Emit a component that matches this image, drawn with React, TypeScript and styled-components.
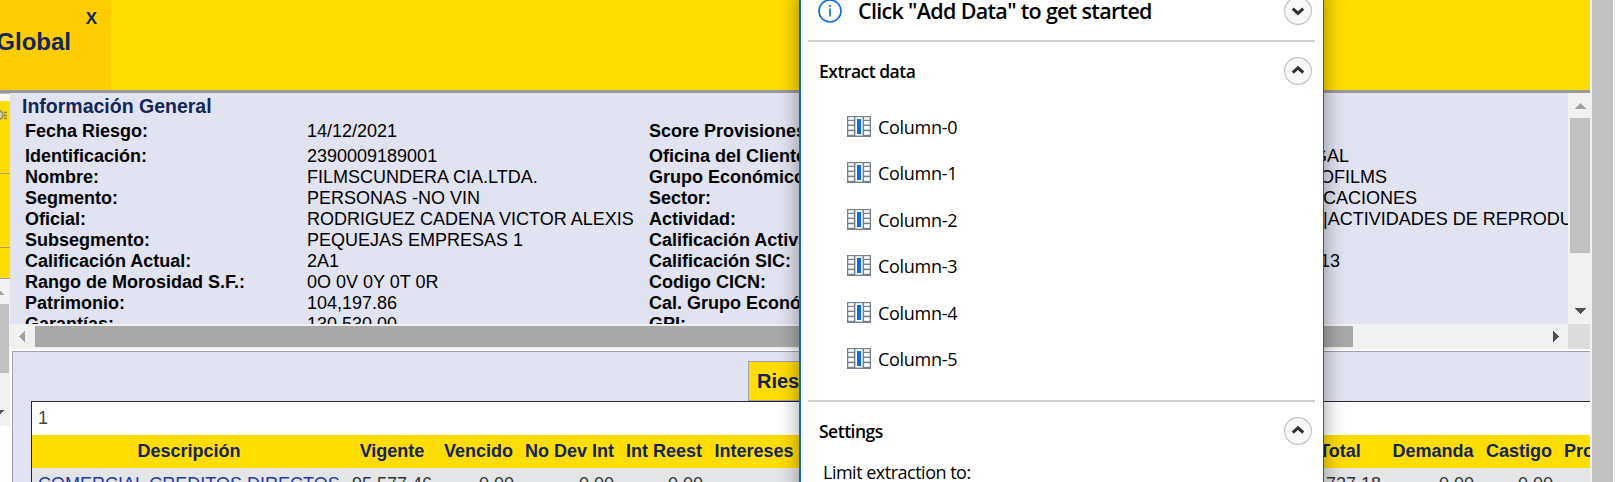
import React from 'react';
import styled, { createGlobalStyle } from 'styled-components';

const Global = createGlobalStyle`
  * { box-sizing: border-box; }
  body { margin: 0; background: #fff; overflow: hidden; font-family: "Liberation Sans", Arial, sans-serif; }
`;

const NAVY = '#12265c';
const YELLOW = '#ffdd00';
const LILAC = '#e1e3f1';

const Screen = styled.div`
  position: relative;
  display: flex;
  width: 1615px;
  height: 482px;
  overflow: hidden;
`;
const Page = styled.div`
  width: 1590px;
  display: flex;
  flex-direction: column;
`;
const PageScroll = styled.div`
  width: 25px;
  padding: 0 2px;
  background: #f1f1f1;
`;
const PageThumb = styled.div`
  height: 100%;
  background: #c1c1c1;
`;
const Header = styled.header`
  height: 93px;
  flex: none;
  background: ${YELLOW};
  border-bottom: 3px solid #999;
  color: ${NAVY};
  font-weight: bold;
`;
const HeaderTab = styled.div`
  width: 111px;
  height: 90px;
  background: #ffcc00;
  display: flex;
  flex-direction: column;
  align-items: flex-end;
`;
const CloseMark = styled.span`
  font-size: 17px;
  line-height: 20px;
  margin: 9px 14px 0 0;
`;
const HeaderTitle = styled.span`
  font-size: 24px;
  line-height: 28px;
  margin: -1px 40px 0 0;
`;
const Body = styled.div`
  flex: 1;
  display: flex;
  min-height: 0;
`;
const Side = styled.aside`
  width: 10px;
  flex: none;
  overflow: hidden;
`;
const SideTop = styled.div`
  height: 8px;
  border-top: 1px solid #b5b6c6;
`;
const SideItem = styled.div<{ $h: number; $line: string }>`
  height: ${p => p.$h}px;
  background: ${YELLOW};
  border-bottom: 1px solid ${p => p.$line};
  svg { display: block; }
`;
const SideScroll = styled.div`
  height: 147px;
  background: #f1f1f1;
  display: flex;
  flex-direction: column;
  svg { display: block; }
`;
const SideThumb = styled.div`
  width: 9px;
  height: 69px;
  background: #c1c1c1;
`;
const Main = styled.main`
  flex: 1;
  min-width: 0;
  display: flex;
  flex-direction: column;
`;
const InfoPane = styled.section`
  display: grid;
  grid-template-columns: 1558px 22px;
  grid-template-rows: 231px 25px;
  flex: none;
`;
const InfoBody = styled.div`
  background: ${LILAC};
  overflow: hidden;
`;
const InfoTitle = styled.h1`
  margin: 0;
  padding-left: 12px;
  height: 28px;
  font-size: 19.5px;
  line-height: 27px;
  color: ${NAVY};
  white-space: nowrap;
`;
const InfoRow = styled.div<{ $h: number }>`
  display: grid;
  grid-template-columns: 282px 342px 664px 1fr;
  padding-left: 15px;
  height: ${p => p.$h}px;
  font-size: 18px;
  line-height: 21px;
  color: #000;
  white-space: nowrap;
`;
const Label = styled.span`
  font-weight: bold;
`;
const Value = styled.span<{ $indent?: number }>`
  padding-left: ${p => p.$indent ?? 0}px;
`;
const VBar = styled.div`
  background: #f1f1f1;
  display: flex;
  flex-direction: column;
  align-items: flex-end;
  justify-content: space-between;
  svg { display: block; }
`;
const VThumb = styled.div`
  width: 20px;
  height: 135px;
  margin-bottom: 46px;
  background: #c1c1c1;
`;
const HBar = styled.div`
  background: #f1f1f1;
  display: flex;
  align-items: center;
  svg { display: block; }
`;
const HThumb = styled.div`
  width: 1318px;
  height: 21px;
  margin-right: auto;
  background: #a8a8a8;
`;
const Corner = styled.div`
  background: #dcdcdc;
`;
const RiskPane = styled.section`
  flex: 1;
  margin: 2px 0 0 2px;
  padding: 9px 0 0 18px;
  background: ${LILAC};
  border-top: 1px solid #9fa0b8;
  border-left: 1px solid #9fa0b8;
`;
const RiskTab = styled.div`
  width: 200px;
  height: 40px;
  margin-left: 717px;
  padding-left: 8px;
  border: 1px solid #9fa0b8;
  background: ${YELLOW};
  color: ${NAVY};
  font-size: 20px;
  font-weight: bold;
  line-height: 38px;
`;
const Sheet = styled.div`
  border-top: 1px solid #26262e;
  border-left: 1px solid #26262e;
  background: #fff;
`;
const PageNo = styled.div`
  height: 33px;
  padding-left: 6px;
  font-size: 18px;
  line-height: 33px;
  color: #444;
`;
const TableRow = styled.div<{ $head?: boolean }>`
  display: grid;
  grid-template-columns: 315px 91px 82px 100px 89px 91px 494px 93px 93px 79px 1fr;
  height: 33px;
  overflow: hidden;
  white-space: nowrap;
  font-size: 18px;
  line-height: ${p => (p.$head ? 33 : 32)}px;
  background: ${p => (p.$head ? YELLOW : '#e4e5e7')};
  color: ${p => (p.$head ? NAVY : '#333')};
  font-weight: ${p => (p.$head ? 'bold' : 'normal')};
  text-align: ${p => (p.$head ? 'center' : 'right')};
`;
const Cell = styled.span<{ $link?: boolean; $left?: boolean }>`
  padding: 0 6px 0 5px;
  ${p => p.$link && 'color: #2439a4; padding-left: 6px;'}
  ${p => p.$left && 'text-align: left;'}
`;

const Dialog = styled.div`
  position: absolute;
  left: 799px;
  top: -10px;
  width: 525px;
  height: 510px;
  padding: 0 8px 0 7px;
  background: #fff;
  border: solid #1464b4;
  border-width: 0 1px 0 2px;
  box-shadow: 0 0 20px rgba(0, 0, 0, 0.4);
  font-family: "Open Sans", "Noto Sans", sans-serif;
  color: #000;
`;
const Bar = styled.div<{ $h: number; $pad: number; $lift?: number }>`
  height: ${p => p.$h}px;
  padding: 0 3px ${p => p.$lift ?? 0}px ${p => p.$pad}px;
  display: flex;
  align-items: center;
  svg { display: block; flex: none; }
`;
const Rule = styled.div`
  height: 2px;
  background: #d0d0d0;
`;
const Prompt = styled.span`
  margin: 0 auto 0 16px;
  font-size: 21.5px;
  font-weight: 600;
  letter-spacing: -0.68px;
  line-height: 30px;
  white-space: nowrap;
`;
const Heading = styled.h2`
  margin: 0 auto 0 0;
  font-size: 17.5px;
  font-weight: 600;
  letter-spacing: -0.5px;
  line-height: 24px;
`;
const Columns = styled.ul`
  margin: 0;
  padding: 16px 0 0 39px;
  height: 300px;
  list-style: none;
`;
const ColumnItem = styled.li`
  display: flex;
  align-items: flex-start;
  height: 46.4px;
  font-size: 18px;
  letter-spacing: -0.3px;
  line-height: 22px;
  svg { display: block; flex: none; }
`;
const ColumnName = styled.span`
  margin-left: 7px;
`;
const Limit = styled.div`
  padding-left: 15px;
  font-size: 18px;
  letter-spacing: -0.5px;
  line-height: 25px;
`;

const Tri = ({ w, h, pts, fill }: { w: number; h: number; pts: string; fill: string }) => (
  <svg width={w} height={h} shapeRendering="crispEdges"><polygon points={pts} fill={fill} /></svg>
);

const InfoIcon = () => (
  <svg width="24" height="24" viewBox="0 0 24 24" fill="none" stroke="#0a6be0">
    <circle cx="12" cy="12" r="11" strokeWidth="1.6" />
    <path d="M12 9.5V17.5" strokeWidth="1.6" />
    <path d="M12 6V7.8" strokeWidth="1.8" />
  </svg>
);

const Chevron = ({ down }: { down?: boolean }) => (
  <svg width="28" height="28" viewBox="0 0 28 28" fill="none">
    <circle cx="14" cy="14" r="13.4" fill="#f8f8f8" stroke="#c4c4c4" strokeWidth="1.2" />
    <path d={down ? 'M8.8 11.6 14 16.4 19.2 11.6' : 'M8.8 15.6 14 10.8 19.2 15.6'} stroke="#303030" strokeWidth="3" />
  </svg>
);

const ColumnIcon = () => (
  <svg width="24" height="21" viewBox="0 0 24 21">
    <rect width="24" height="21" fill="#75808a" />
    <g fill="#fff">
      {[1.2, 5, 10, 15.2].map((y, i) => (
        <React.Fragment key={y}>
          <rect x="1.3" y={y} width="5.6" height={i ? 3.6 : 2.6} />
          <rect x="17.1" y={y} width="5.6" height={i ? 3.6 : 2.6} />
        </React.Fragment>
      ))}
      <rect x="8.4" y="1.2" width="7.2" height="18.4" />
    </g>
    <rect x="10" y="3" width="4" height="15" fill="#0a6be0" />
  </svg>
);

const info: [string, string, string, string, number, number][] = [
  ['Fecha Riesgo:', '14/12/2021', 'Score Provisiones:', '', 0, 25],
  ['Identificación:', '2390009189001', 'Oficina del Cliente:', 'GAL', 0, 21],
  ['Nombre:', 'FILMSCUNDERA CIA.LTDA.', 'Grupo Económico:', 'OFILMS', 7, 21],
  ['Segmento:', 'PERSONAS -NO VIN', 'Sector:', 'CACIONES', 10, 21],
  ['Oficial:', 'RODRIGUEZ CADENA VICTOR ALEXIS', 'Actividad:', '|ACTIVIDADES DE REPRODUCCION', 10, 21],
  ['Subsegmento:', 'PEQUEJAS EMPRESAS 1', 'Calificación Activa:', '', 0, 21],
  ['Calificación Actual:', '2A1', 'Calificación SIC:', '13', 7, 21],
  ['Rango de Morosidad S.F.:', '0O 0V 0Y 0T 0R', 'Codigo CICN:', '', 0, 21],
  ['Patrimonio:', '104,197.86', 'Cal. Grupo Económico:', '', 0, 21],
  ['Garantías:', '130,530.00', 'GPI:', '', 0, 21],
];

const heads = ['Descripción', 'Vigente', 'Vencido', 'No Dev Int', 'Int Reest', 'Intereses', '', 'Total', 'Demanda', 'Castigo', 'Provisión'];
const values = ['COMERCIAL CREDITOS DIRECTOS', '95,577.46', '0.00', '0.00', '0.00', '', '', '95,727.18', '0.00', '0.00', ''];

export default function App() {
  return (
    <Screen>
      <Global />
      <Page>
        <Header>
          <HeaderTab>
            <CloseMark>X</CloseMark>
            <HeaderTitle>Global</HeaderTitle>
          </HeaderTab>
        </Header>
        <Body>
          <Side>
            <SideTop />
            <SideItem $h={73} $line="#a89f62">
              <svg width="10" height="24" fill="none">
                <circle cx="-1" cy="14" r="4" fill="#d8d2b0" stroke="#9c9470" strokeWidth="2" />
                <path d="M4 11.5H7M4 14.5H7M4 17.5H7" stroke="#8c8130" strokeWidth="1.4" />
              </svg>
            </SideItem>
            <SideItem $h={74} $line="#a89f62" />
            <SideItem $h={31} $line="#9fa0b8" />
            <SideScroll>
              <Tri w={10} h={25} pts="-6,16 -1,11 4,16" fill="#a3a3a3" />
              <SideThumb />
              <Tri w={10} h={53} pts="-6,37 4,37 -1,42" fill="#505050" />
            </SideScroll>
          </Side>
          <Main>
            <InfoPane>
              <InfoBody>
                <InfoTitle>Información General</InfoTitle>
                {info.map(([a, b, c, d, indent, h]) => (
                  <InfoRow key={a} $h={h}>
                    <Label>{a}</Label>
                    <Value>{b}</Value>
                    <Label>{c}</Label>
                    <Value $indent={indent}>{d}</Value>
                  </InfoRow>
                ))}
              </InfoBody>
              <VBar>
                <Tri w={20} h={25} pts="5,16 10.5,10 16,16" fill="#a3a3a3" />
                <VThumb />
                <Tri w={20} h={25} pts="5,9 16,9 10.5,15" fill="#505050" />
              </VBar>
              <HBar>
                <Tri w={25} h={25} pts="15,7 15,18 9,12.5" fill="#a3a3a3" />
                <HThumb />
                <Tri w={25} h={25} pts="10,7 10,18 16,12.5" fill="#505050" />
              </HBar>
              <Corner />
            </InfoPane>
            <RiskPane>
              <RiskTab>Riesgo Directo</RiskTab>
              <Sheet>
                <PageNo>1</PageNo>
                <TableRow $head>
                  {heads.map((t, i) => <Cell key={i} $left={i === 10}>{t}</Cell>)}
                </TableRow>
                <TableRow>
                  {values.map((t, i) => <Cell key={i} $link={i === 0} $left={i === 0}>{t}</Cell>)}
                </TableRow>
              </Sheet>
            </RiskPane>
          </Main>
        </Body>
      </Page>
      <PageScroll><PageThumb /></PageScroll>
      <Dialog>
        <Bar $h={50} $pad={10} $lift={8}>
          <InfoIcon />
          <Prompt>Click "Add Data" to get started</Prompt>
          <Chevron down />
        </Bar>
        <Rule />
        <Bar $h={58} $pad={11}>
          <Heading>Extract data</Heading>
          <Chevron />
        </Bar>
        <Columns>
          {[0, 1, 2, 3, 4, 5].map(n => (
            <ColumnItem key={n}>
              <ColumnIcon />
              <ColumnName>{`Column-${n}`}</ColumnName>
            </ColumnItem>
          ))}
        </Columns>
        <Rule />
        <Bar $h={58} $pad={11}>
          <Heading>Settings</Heading>
          <Chevron />
        </Bar>
        <Limit>Limit extraction to:</Limit>
      </Dialog>
    </Screen>
  );
}
